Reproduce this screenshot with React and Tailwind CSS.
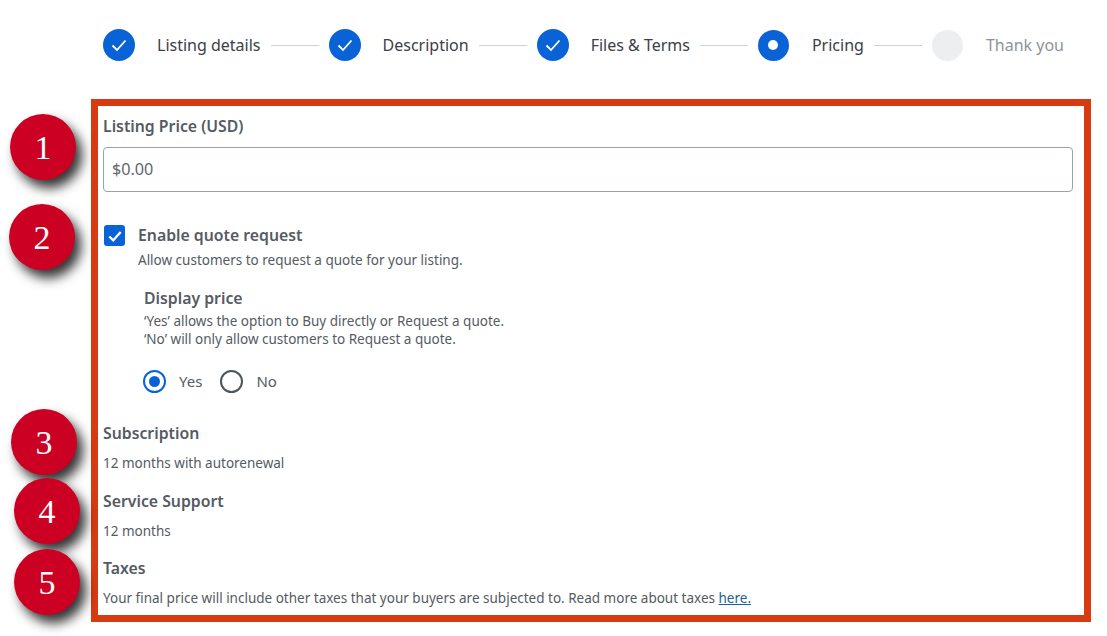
import React from 'react';

const steps = [
  { label: 'Listing details', state: 'done' },
  { label: 'Description', state: 'done' },
  { label: 'Files & Terms', state: 'done' },
  { label: 'Pricing', state: 'current' },
  { label: 'Thank you', state: 'todo' },
];

const badges = [
  { n: 1, cls: 'left-[10px] top-[114px]' },
  { n: 2, cls: 'left-[9px] top-[204px]' },
  { n: 3, cls: 'left-[11px] top-[409px]' },
  { n: 4, cls: 'left-[14px] top-[478px]' },
  { n: 5, cls: 'left-[14px] top-[549px]' },
];

function Check({ className, width = 1.8 }) {
  return (
    <svg viewBox="0 0 16 16" fill="none" stroke="currentColor" strokeWidth={width} className={className}>
      <path d="M1.5 8.5 L6 13 L14.5 3.5" />
    </svg>
  );
}

function StepIcon({ state }) {
  if (state === 'done') {
    return (
      <div className="w-8 h-8 rounded-full bg-[#0a63d6] text-white flex items-center justify-center shrink-0">
        <Check className="w-4 h-4" />
      </div>
    );
  }
  if (state === 'current') {
    return (
      <div className="w-[31px] h-[31px] rounded-full bg-[#0a63d6] flex items-center justify-center shrink-0">
        <div className="w-2.5 h-2.5 rounded-full bg-white"></div>
      </div>
    );
  }
  return <div className="w-[31px] h-[31px] rounded-full bg-[#eceef0] shrink-0"></div>;
}

function Stepper() {
  return (
    <div className="flex items-center h-8 pl-[103px] mt-[29px]">
      {steps.map((step, i) => (
        <React.Fragment key={step.label}>
          <StepIcon state={step.state} />
          <span className={`text-base whitespace-nowrap ${step.state === 'done' ? 'ml-[22px]' : 'ml-[23px]'} ${step.state === 'todo' ? 'text-[#8d9499]' : 'text-[#3b4046]'}`}>
            {step.label}
          </span>
          {i < steps.length - 1 && <div className="w-12 h-px bg-[#cfd3d6] mx-[10px]"></div>}
        </React.Fragment>
      ))}
    </div>
  );
}

function Radio({ checked, label }) {
  return (
    <div className="flex items-center gap-[13px]">
      <div className={`w-[23px] h-[23px] rounded-full border-2 flex items-center justify-center ${checked ? 'border-[#0a63d6]' : 'border-[#4b555c]'}`}>
        {checked && <div className="w-[11px] h-[11px] rounded-full bg-[#0a63d6]"></div>}
      </div>
      <span className="text-[15px] text-[#545b62]">{label}</span>
    </div>
  );
}

function Info({ title, children, className }) {
  return (
    <div className={className}>
      <div className="text-[15.8px] leading-5 font-semibold text-[#545b62]">{title}</div>
      <div className="text-[13.5px] leading-[18px] text-[#545b62] mt-[11px]">{children}</div>
    </div>
  );
}

export default function App() {
  return (
    <div className="relative w-[1107px] h-[636px] overflow-hidden bg-white font-['Noto_Sans',sans-serif]">
      <Stepper />

      <div className="ml-[91px] mt-[38px] w-[1000px] h-[523px] border-[7px] border-[#d83b12] pl-[5px] pr-[11px] pt-[10px]">
        <div className="text-[15.8px] leading-5 font-semibold text-[#545b62]">Listing Price (USD)</div>
        <div className="mt-[11px] h-[45px] border border-[#9aa3a8] rounded flex items-center px-2 text-[16.2px] text-[#5f666c]">
          $0.00
        </div>

        <div className="flex mt-[33px] ml-[1px]">
          <div className="w-[21px] h-[21px] rounded-[3px] bg-[#0a63d6] text-white flex items-center justify-center shrink-0">
            <Check className="w-[14px] h-[14px]" width={2.6} />
          </div>
          <div className="ml-[13px]">
            <div className="text-[15.8px] leading-5 font-semibold text-[#545b62]">Enable quote request</div>
            <div className="text-[13.5px] leading-[18px] text-[#545b62] mt-[6px]">Allow customers to request a quote for your listing.</div>
          </div>
        </div>

        <div className="ml-[41px] mt-[19px]">
          <div className="text-[15.8px] leading-5 font-semibold text-[#545b62]">Display price</div>
          <div className="text-[13.5px] leading-[18px] text-[#545b62] mt-[4px]">
            <p>‘Yes’ allows the option to Buy directly or Request a quote.</p>
            <p>‘No’ will only allow customers to Request a quote.</p>
          </div>
          <div className="flex gap-[18px] mt-[22px] -ml-[1px]">
            <Radio checked label="Yes" />
            <Radio label="No" />
          </div>
        </div>

        <Info title="Subscription" className="mt-[30px]">12 months with autorenewal</Info>
        <Info title="Service Support" className="mt-[19px]">12 months</Info>
        <Info title="Taxes" className="mt-[18px]">
          Your final price will include other taxes that your buyers are subjected to. Read more about taxes{' '}
          <a href="#" className="text-[#1d5f96] underline">here.</a>
        </Info>
      </div>

      {badges.map((b) => (
        <div
          key={b.n}
          className={`absolute ${b.cls} w-[66px] h-[66px] rounded-full bg-[#cc0022] shadow-[6px_8px_12px_rgba(0,0,0,0.8)] flex items-center justify-center text-white text-[34px] font-['Liberation_Serif',serif]`}
        >
          {b.n}
        </div>
      ))}
    </div>
  );
}
